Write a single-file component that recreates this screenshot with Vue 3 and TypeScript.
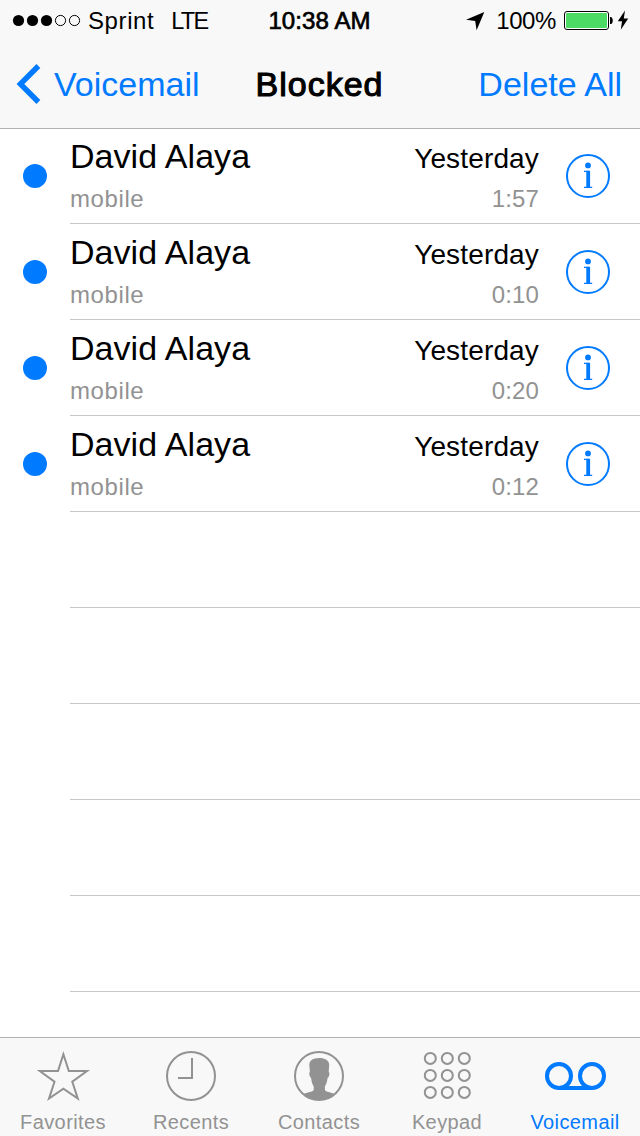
<script setup lang="ts">
interface Message {
  name: string
  label: string
  date: string
  duration: string
}

const messages: Message[] = ['1:57', '0:10', '0:20', '0:12'].map((duration) => ({
  name: 'David Alaya',
  label: 'mobile',
  date: 'Yesterday',
  duration,
}))

const emptyRows = 5
const signal = [true, true, true, false, false]
const keys = [0, 1, 2].flatMap((row) =>
  [0, 1, 2].map((col) => ({ x: 46.3 + col * 17, y: 20.4 + row * 17 })),
)
</script>

<template>
  <div class="phone">
    <header class="header">
      <div class="status">
        <div class="status-left">
          <svg class="signal" width="70" height="14" viewBox="0 0 70 14">
            <circle
              v-for="(on, i) in signal"
              :key="i"
              :cx="6.5 + i * 14"
              cy="6.5"
              :r="on ? 5.6 : 5.1"
              :fill="on ? '#000' : 'none'"
              :stroke="on ? 'none' : '#000'"
            />
          </svg>
          <span class="carrier">Sprint</span>
          <span class="network">LTE</span>
        </div>
        <span class="clock">10:38 AM</span>
        <div class="status-right">
          <svg class="location" width="20" height="20" viewBox="465 11 20 20">
            <path d="M466 19.8 484.3 12 476.6 30.2 475.2 21Z" />
          </svg>
          <span class="percent">100%</span>
          <svg class="battery" width="66" height="22" viewBox="563 10 66 22">
            <rect x="564.5" y="11.5" width="44" height="18" rx="2.5" fill="#fff" stroke="#000" />
            <rect x="566" y="13" width="41" height="15" rx="1" fill="#4cd964" />
            <path d="M610 17h1.2q1.6 1 1.6 3.5t-1.6 3.5H610z" />
            <path d="M625 10.5 617.8 21.3H622L620.8 29.8 628.2 18.4H623.8Z" />
          </svg>
        </div>
      </div>
      <nav class="nav">
        <a class="back">
          <svg width="28" height="44" viewBox="15 62.6 28 44">
            <path d="M38.4 66.6 20.4 84.6 38.4 102.6" fill="none" stroke="#007aff" stroke-width="5.4" />
          </svg>
          <span>Voicemail</span>
        </a>
        <h1 class="title">Blocked</h1>
        <a class="delete">Delete All</a>
      </nav>
    </header>

    <main class="list">
      <article v-for="message in messages" :key="message.duration" class="row">
        <span class="unread"></span>
        <div class="cell">
          <div class="line primary">
            <span class="name">{{ message.name }}</span>
            <span class="date">{{ message.date }}</span>
          </div>
          <div class="line secondary">
            <span class="label">{{ message.label }}</span>
            <span class="duration">{{ message.duration }}</span>
          </div>
          <svg class="info" width="44" height="44" viewBox="0 0 44 44">
            <circle cx="22" cy="22" r="21" fill="none" stroke="#007aff" stroke-width="2" />
            <circle cx="22" cy="11.4" r="2.9" fill="#007aff" />
            <path
              d="M18 17.4H22.4V33M18 33.4H26.2"
              fill="none"
              stroke="#007aff"
              stroke-width="1.3"
            />
            <path d="M22.2 16.8V33.5" stroke="#007aff" stroke-width="3.8" />
          </svg>
        </div>
      </article>
      <div v-for="n in emptyRows" :key="n" class="row"><div class="cell"></div></div>
    </main>

    <footer class="tabs">
      <a class="tab">
        <svg width="128" height="66" viewBox="0 0 128 66">
          <path
            d="M63.4 16.3 68.8 33.1H87L72.3 43.7 77.8 60.6 63.4 50.6 49 60.6 54.5 43.7 39.8 33.1H58Z"
            class="outline"
            stroke-miterlimit="10"
          />
        </svg>
        <span>Favorites</span>
      </a>
      <a class="tab">
        <svg width="128" height="66" viewBox="0 0 128 66">
          <circle cx="63" cy="38" r="24" class="outline" />
          <path d="M64 20V40H50" class="outline" />
        </svg>
        <span>Recents</span>
      </a>
      <a class="tab">
        <svg width="128" height="66" viewBox="0 0 128 66">
          <circle cx="63" cy="38" r="24" class="outline" />
          <path
            d="M63 20C57 20.2 53.5 22.5 53.3 26.5L53.9 34Q52.9 34.2 53.3 36.5 53.8 39.2 55 39.8L56 45 57.7 48.5V52C56.5 54 51.5 54.2 47 56.3Q53.5 62.2 63 62.2T79 56.3C74.5 54.2 70 54 68.9 52V48.5L70.6 45 71.7 39.8Q72.9 39.2 73.4 36.5 73.7 34.2 72.7 34L73.2 26.5C73 22.5 69 20 63 20Z"
            fill="#929292"
          />
        </svg>
        <span>Contacts</span>
      </a>
      <a class="tab">
        <svg width="128" height="66" viewBox="0 0 128 66">
          <circle v-for="(k, i) in keys" :key="i" :cx="k.x" :cy="k.y" r="5.5" class="outline" />
        </svg>
        <span>Keypad</span>
      </a>
      <a class="tab active">
        <svg width="128" height="66" viewBox="0 0 128 66">
          <g fill="none" stroke="#007aff" stroke-width="4">
            <circle cx="47" cy="38" r="12" />
            <circle cx="80" cy="38" r="12" />
            <path d="M47 50H80" />
          </g>
        </svg>
        <span>Voicemail</span>
      </a>
    </footer>
  </div>
</template>

<style>
body {
  margin: 0;
  background: #fff;
}
</style>

<style scoped>
.phone {
  display: flex;
  flex-direction: column;
  width: 640px;
  height: 1136px;
  overflow: hidden;
  background: #fff;
  color: #000;
  font-family: "Liberation Sans", Arial, Helvetica, sans-serif;
  white-space: nowrap;
}
.header {
  flex: none;
  box-sizing: border-box;
  height: 129px;
  background: #f8f8f8;
  border-bottom: 1px solid #b2b2b2;
}
.status {
  display: grid;
  grid-template-columns: 1fr auto 1fr;
  align-items: center;
  height: 40px;
  padding: 0 11px 0 12px;
  font-size: 24px;
  line-height: 42px;
}
.status-left,
.status-right {
  display: flex;
  align-items: center;
}
.status-right {
  justify-content: flex-end;
}
.carrier {
  margin-left: 6px;
  letter-spacing: 0.6px;
}
.network {
  margin-left: 17px;
  font-size: 23.5px;
  letter-spacing: -1.8px;
}
.clock {
  padding-right: 2px;
  letter-spacing: 0.1px;
  -webkit-text-stroke: 0.7px #000;
}
.percent {
  margin: 0 7px 0 11px;
  letter-spacing: -0.4px;
}
.nav {
  display: grid;
  grid-template-columns: 1fr auto 1fr;
  align-items: center;
  height: 88px;
  padding: 0 18px 0 15px;
  font-size: 34px;
  line-height: 88px;
}
.back,
.delete {
  color: #007aff;
}
.back {
  display: flex;
  align-items: center;
}
.back span {
  margin-left: 11px;
}
.title {
  margin: 0;
  padding-left: 2px;
  font-size: 34px;
  font-weight: 400;
  letter-spacing: 1px;
  -webkit-text-stroke: 1.1px #000;
}
.delete {
  text-align: right;
}
.list {
  flex: 1;
  min-height: 0;
  overflow: hidden;
}
.row {
  display: grid;
  grid-template-columns: 70px 1fr;
  height: 96px;
}
.row:first-child {
  height: 95px;
}
.unread {
  align-self: end;
  width: 24px;
  height: 24px;
  margin: 0 0 36px 23px;
  border-radius: 50%;
  background: #007aff;
}
.cell {
  grid-column: 2;
  display: grid;
  grid-template-columns: 469px 44px;
  grid-template-rows: 49px 34px;
  align-content: end;
  column-gap: 27px;
  padding-bottom: 7px;
  border-bottom: 1px solid #c8c7cc;
}
.line {
  display: flex;
  align-items: baseline;
  justify-content: space-between;
  grid-column: 1;
}
.primary {
  line-height: 46px;
}
.secondary {
  line-height: 34px;
  font-size: 24px;
  color: #929292;
}
.name {
  font-size: 34px;
  letter-spacing: 0.05px;
}
.date {
  font-size: 28px;
  letter-spacing: 0.15px;
}
.label {
  letter-spacing: 0.6px;
}
.duration {
  letter-spacing: 0.15px;
}
.info {
  grid-column: 2;
  grid-row: 1 / 3;
  align-self: end;
  margin-bottom: 18px;
}
.tabs {
  flex: none;
  box-sizing: border-box;
  display: grid;
  grid-template-columns: repeat(5, 128px);
  height: 99px;
  background: #f8f8f8;
  border-top: 1px solid #b2b2b2;
}
.tab {
  display: flex;
  flex-direction: column;
  color: #929292;
  font-size: 20px;
  line-height: 36px;
}
.tab span {
  text-align: center;
  padding-right: 2px;
  letter-spacing: 0.4px;
}
.tab svg {
  display: block;
}
.outline {
  fill: none;
  stroke: #929292;
  stroke-width: 2;
}
.active {
  color: #007aff;
}
</style>
